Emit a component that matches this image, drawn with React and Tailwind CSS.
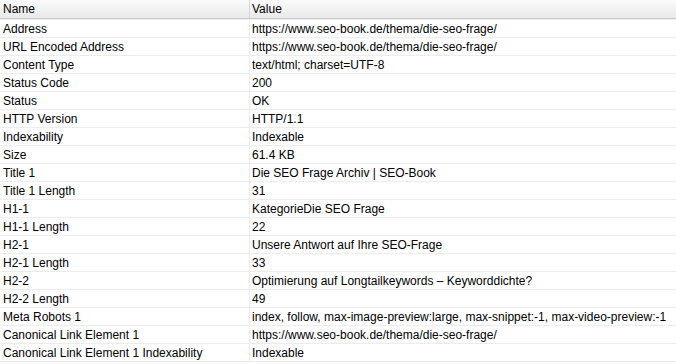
const rows = [
  ['Address', 'https://www.seo-book.de/thema/die-seo-frage/'],
  ['URL Encoded Address', 'https://www.seo-book.de/thema/die-seo-frage/'],
  ['Content Type', 'text/html; charset=UTF-8'],
  ['Status Code', '200'],
  ['Status', 'OK'],
  ['HTTP Version', 'HTTP/1.1'],
  ['Indexability', 'Indexable'],
  ['Size', '61.4 KB'],
  ['Title 1', 'Die SEO Frage Archiv | SEO-Book'],
  ['Title 1 Length', '31'],
  ['H1-1', 'KategorieDie SEO Frage'],
  ['H1-1 Length', '22'],
  ['H2-1', 'Unsere Antwort auf Ihre SEO-Frage'],
  ['H2-1 Length', '33'],
  ['H2-2', 'Optimierung auf Longtailkeywords – Keyworddichte?'],
  ['H2-2 Length', '49'],
  ['Meta Robots 1', 'index, follow, max-image-preview:large, max-snippet:-1, max-video-preview:-1'],
  ['Canonical Link Element 1', 'https://www.seo-book.de/thema/die-seo-frage/'],
  ['Canonical Link Element 1 Indexability', 'Indexable'],
];

export default function App() {
  return (
    <div className="w-[676px] h-[364px] overflow-hidden bg-white text-[12px] text-black font-['Liberation_Sans',Arial,sans-serif]">
      {/* header */}
      <div className="grid grid-cols-[250px_1fr] h-[19px] bg-gradient-to-b from-[#fbfbfb] to-[#e9e9e9] border-b border-[#c8c8c8] shadow-[0_1px_0_#f0f0f0]">
        <div className="pl-[3px] pt-[1px] leading-[17px] border-r border-[#d5d5d5]">Name</div>
        <div className="pl-[2px] pt-[1px] leading-[17px]">Value</div>
      </div>
      <div className="mt-[1px]">
        {rows.map(([name, value], i) => (
          <div key={i} className="grid grid-cols-[250px_1fr] h-[18px] border-b border-[#ececec]">
            <div className="pl-[3px] pt-[1px] leading-[16px] border-r border-[#ececec] whitespace-nowrap">{name}</div>
            <div className="pl-[2px] pt-[1px] leading-[16px] whitespace-nowrap">{value}</div>
          </div>
        ))}
      </div>
    </div>
  );
}
